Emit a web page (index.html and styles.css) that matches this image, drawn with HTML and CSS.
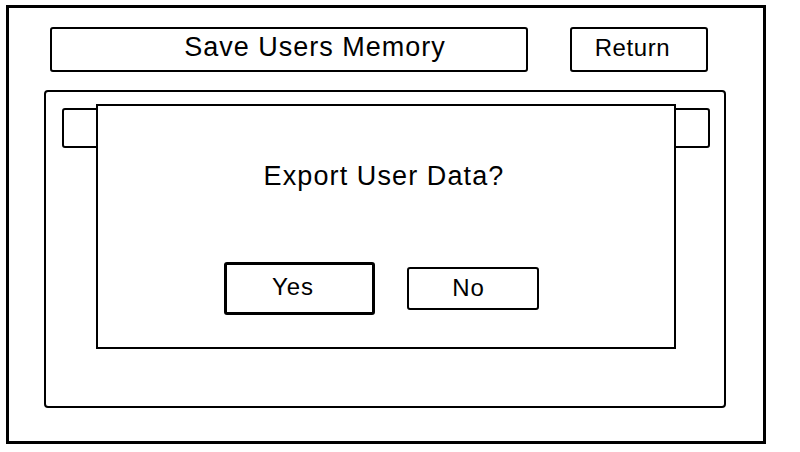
FILE: index.html
```html
<!DOCTYPE html>
<html>
<head>
<meta charset="utf-8">
<link rel="stylesheet" href="styles.css">
</head>
<body>
<div class="frame">
  <div class="header">
    <div class="title-box">Save Users Memory</div>
    <div class="return-btn">Return</div>
  </div>
  <div class="panel">
    <div class="tab-bar"></div>
    <div class="dialog">
      <div class="dialog-text">Export User Data?</div>
      <div class="dialog-buttons">
        <div class="btn btn-yes">Yes</div>
        <div class="btn btn-no">No</div>
      </div>
    </div>
  </div>
</div>
</body>
</html>
```
FILE: styles.css
```css
* { box-sizing: border-box; }
html, body { margin: 0; padding: 0; background: #fff; }
body {
  width: 800px;
  height: 452px;
  overflow: hidden;
  font-family: "Liberation Sans", Arial, sans-serif;
  color: #000;
}
.frame {
  margin: 5px 0 0 6px;
  width: 760px;
  height: 439px;
  border: 3px solid #000;
  padding: 19px 0 0 35px;
}
.header {
  display: flex;
  align-items: flex-start;
  padding-left: 6px;
}
.title-box {
  width: 478px;
  height: 45px;
  border: 2px solid #000;
  border-radius: 3px;
  display: flex;
  align-items: center;
  justify-content: center;
  font-size: 27px;
  letter-spacing: 1px;
  padding: 0 0 5px 52px;
  line-height: 30px;
}
.return-btn {
  margin-left: 42px;
  width: 138px;
  height: 45px;
  border: 2px solid #000;
  border-radius: 3px;
  display: flex;
  align-items: center;
  justify-content: center;
  font-size: 24px;
  letter-spacing: 0.6px;
  line-height: 28px;
  padding: 0 13px 3px 0;
}
.panel {
  position: relative;
  margin-top: 18px;
  width: 682px;
  height: 318px;
  border: 2px solid #000;
  border-radius: 4px;
  padding: 16px 0 0 16px;
}
.tab-bar {
  width: 648px;
  height: 40px;
  border: 2px solid #000;
  border-radius: 3px;
}
.dialog {
  position: absolute;
  left: 50px;
  top: 12px;
  width: 580px;
  height: 245px;
  border: 2px solid #000;
  background: #fff;
  padding-top: 55px;
}
.dialog-text {
  text-align: center;
  font-size: 27px;
  line-height: 30px;
  letter-spacing: 1.1px;
  padding-right: 4px;
}
.dialog-buttons {
  display: flex;
  align-items: center;
  margin-top: 71px;
  padding-left: 126px;
  gap: 32px;
}
.btn {
  display: flex;
  align-items: center;
  justify-content: center;
  font-size: 24px;
  line-height: 28px;
  letter-spacing: 1px;
  border-radius: 3px;
}
.btn-yes {
  width: 151px;
  height: 53px;
  border: 3px solid #000;
  padding: 0 13px 3px 0;
}
.btn-no {
  width: 132px;
  height: 43px;
  border: 2px solid #000;
  padding: 0 9px 2px 0;
}
```
